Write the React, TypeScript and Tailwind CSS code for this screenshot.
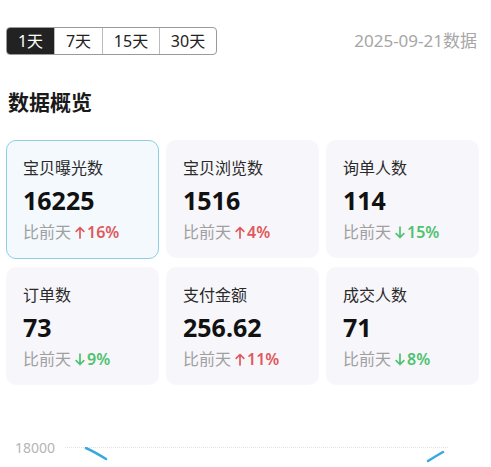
const ranges = [
  { label: "1天", w: "w-[47px]" },
  { label: "7天", w: "w-[48px]" },
  { label: "15天", w: "w-[57px]" },
  { label: "30天", w: "w-[57px]" },
];

const stats = [
  { label: "宝贝曝光数", value: "16225", change: "16%", up: true, active: true },
  { label: "宝贝浏览数", value: "1516", change: "4%", up: true },
  { label: "询单人数", value: "114", change: "15%", up: false },
  { label: "订单数", value: "73", change: "9%", up: false },
  { label: "支付金额", value: "256.62", change: "11%", up: true },
  { label: "成交人数", value: "71", change: "8%", up: false },
];

function Arrow({ up }: { up: boolean }) {
  return (
    <svg width="10" height="13" viewBox="0 0 10 13" className={up ? "" : "rotate-180"}>
      <path d="M5 12V1.5M1.2 5.3L5 1.5l3.8 3.8" fill="none" stroke="currentColor" strokeWidth="1.7" strokeLinecap="round" strokeLinejoin="round" />
    </svg>
  );
}

export default function App() {
  return (
    <main
      className="h-[467px] w-[491px] overflow-hidden bg-white"
      style={{ fontFamily: '"Noto Sans", "Noto Sans CJK SC", sans-serif' }}
    >
      <div className="flex items-center justify-between pl-[6px] pr-[14px] pt-[27px]">
        <div className="flex h-[28px] overflow-hidden rounded-[4px] border border-[#9a9a9a]">
          {ranges.map((r, i) => (
            <div
              key={r.label}
              className={
                i === 0
                  ? `flex ${r.w} items-center justify-center bg-[#222] text-[16px] text-white`
                  : `flex ${r.w} items-center justify-center border-l border-[#bbb] text-[16px] text-[#222]`
              }
            >
              {r.label}
            </div>
          ))}
        </div>
        <div className="text-[17px] text-[#a6a6a6]">2025-09-21数据</div>
      </div>

      <h2 className="mt-[37px] pl-[8px] text-[21px] font-bold leading-none text-[#1a1a1a]">数据概览</h2>

      <div className="mt-[27px] grid grid-cols-3 gap-x-[7px] gap-y-[8px] pl-[6px] pr-[12px]">
        {stats.map((s) => (
          <div
            key={s.label}
            className={
              s.active
                ? "h-[119px] rounded-[10px] border-[1.5px] border-[#8ccfe3] bg-[#f3f9fd] pl-[16px] pt-[17px]"
                : "h-[118px] rounded-[10px] bg-[#f7f6fa] pl-[17px] pt-[18px]"
            }
          >
            <div className="text-[16px] leading-[20px] text-[#2a2a2a]">{s.label}</div>
            <div className="mt-[8px] text-[25px] font-bold leading-[28px] text-[#111]">{s.value}</div>
            <div className="mt-[7px] flex items-center text-[16px] leading-[22px] text-[#a0a0a0]">
              比前天
              <span className={s.up ? "ml-[4px] flex items-center gap-[2px] font-semibold text-[#e0595b]" : "ml-[4px] flex items-center gap-[2px] font-semibold text-[#4fc26f]"}>
                <Arrow up={s.up} />
                {s.change}
              </span>
            </div>
          </div>
        ))}
      </div>

      <div className="relative mt-[52px] flex items-center pl-[15px]">
        <span className="text-[14px] text-[#b5b5b5]">18000</span>
        <div className="ml-[10px] w-[383px] border-t border-dotted border-[#e3e3e3]" />
        <svg className="absolute left-0 top-[10px]" width="491" height="30" viewBox="0 0 491 30">
          <path d="M86 1 Q95 5 106 12" fill="none" stroke="#3aa8e0" strokeWidth="2.5" strokeLinecap="round" />
          <path d="M428 14 Q436 9 443 5" fill="none" stroke="#3aa8e0" strokeWidth="2.5" strokeLinecap="round" />
        </svg>
      </div>
    </main>
  );
}
